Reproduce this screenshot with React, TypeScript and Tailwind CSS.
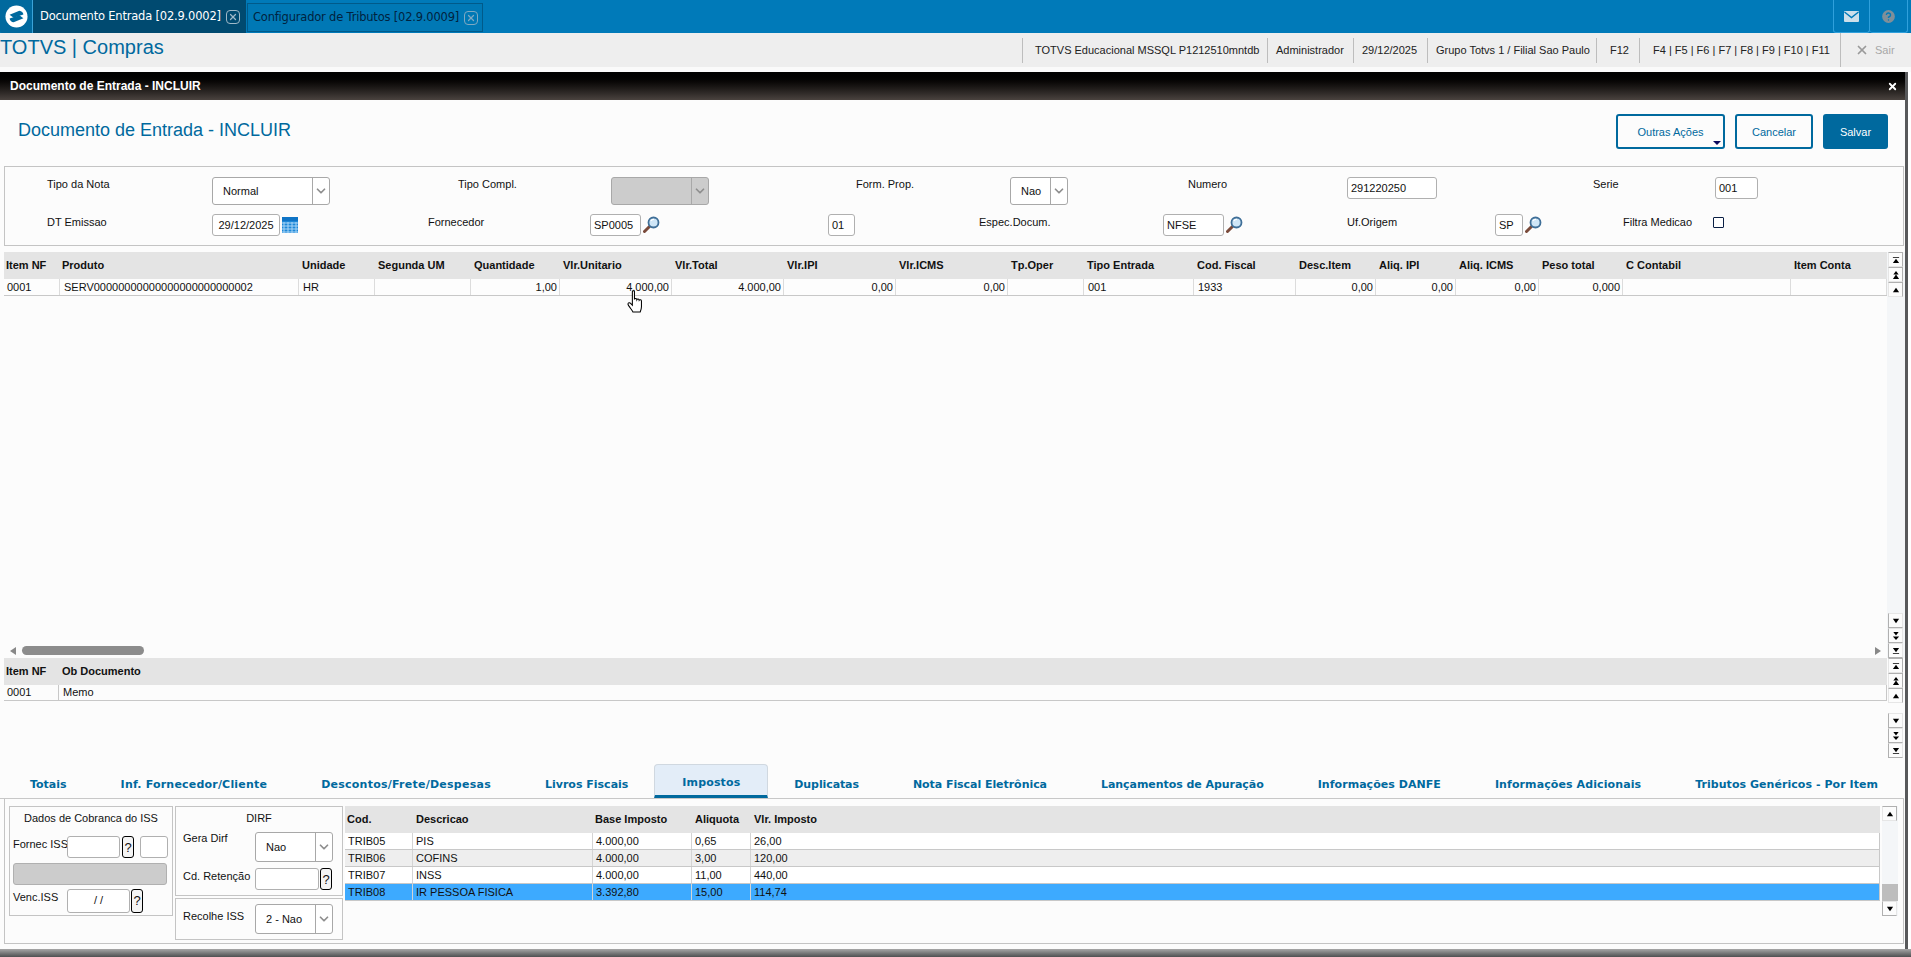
import React from 'react';
import { X, CircleHelp, ChevronDown } from 'lucide-react';

const gridCols = [
  ['Item NF', 56, '0001', 'l'],
  ['Produto', 239, 'SERV00000000000000000000000002', 'l'],
  ['Unidade', 76, 'HR', 'l'],
  ['Segunda UM', 96, '', 'l'],
  ['Quantidade', 89, '1,00', 'r'],
  ['Vlr.Unitario', 112, '4.000,00', 'r'],
  ['Vlr.Total', 112, '4.000,00', 'r'],
  ['Vlr.IPI', 112, '0,00', 'r'],
  ['Vlr.ICMS', 112, '0,00', 'r'],
  ['Tp.Oper', 76, '', 'l'],
  ['Tipo Entrada', 110, '001', 'l'],
  ['Cod. Fiscal', 102, '1933', 'l'],
  ['Desc.Item', 80, '0,00', 'r'],
  ['Aliq. IPI', 80, '0,00', 'r'],
  ['Aliq. ICMS', 83, '0,00', 'r'],
  ['Peso total', 84, '0,000', 'r'],
  ['C Contabil', 168, '', 'l'],
  ['Item Conta', 96, '', 'l'],
] as const;

const taxRows = [
  ['TRIB05', 'PIS', '4.000,00', '0,65', '26,00'],
  ['TRIB06', 'COFINS', '4.000,00', '3,00', '120,00'],
  ['TRIB07', 'INSS', '4.000,00', '11,00', '440,00'],
  ['TRIB08', 'IR PESSOA FISICA', '3.392,80', '15,00', '114,74'],
];

const tabs = [
  ['Totais', 'tracking-normal'],
  ['Inf. Fornecedor/Cliente', 'tracking-[0.2px]'],
  ['Descontos/Frete/Despesas', 'tracking-[0.25px]'],
  ['Livros Fiscais', 'tracking-normal'],
  ['Impostos', 'tracking-[0.15px]'],
  ['Duplicatas', 'tracking-[-0.1px]'],
  ['Nota Fiscal Eletrônica', 'tracking-[-0.05px]'],
  ['Lançamentos de Apuração', 'tracking-[-0.05px]'],
  ['Informações DANFE', 'tracking-[0.05px]'],
  ['Informações Adicionais', 'tracking-[0.1px]'],
  ['Tributos Genéricos - Por Item', 'tracking-[0.05px]'],
];

type ArrowKind = 'up' | 'down' | 'dup' | 'ddown' | 'top' | 'bottom';

const Logo = () => (
  <svg viewBox="0 0 24 24" className="w-[23px] h-[23px]">
    <circle cx="12" cy="12" r="11.5" fill="#fff" />
    <path d="M4.8 10.2 L15 6 Q18.6 6.6 19.2 10 L9 13.2 Z" fill="#00699e" />
    <path d="M19.2 13.8 L9 18 Q5.4 17.4 4.8 14 L15 10.8 Z" fill="#00699e" />
  </svg>
);

const MailIcon = () => (
  <svg viewBox="0 0 15 11" className="w-[15px] h-[11px]">
    <rect width="15" height="11" rx="1" fill="#cddfea" />
    <path d="M0.5 1 L7.5 6.5 L14.5 1" fill="none" stroke="#007ab9" strokeWidth="1.4" />
  </svg>
);

const CalendarIcon = () => (
  <svg viewBox="0 0 16 16" className="w-4 h-4 ml-[2px] mt-[3px] shrink-0">
    <rect width="16" height="16" fill="#1e88d8" />
    <rect x="0" y="0" width="16" height="4" fill="#0f74c6" />
    {[2, 6, 10, 14].map((x) => (
      <path key={x} d={`M${x} 5V16`} stroke="#a9d6f7" strokeWidth="1" />
    ))}
    {[6, 9, 12, 15].map((y) => (
      <path key={y} d={`M0 ${y}H16`} stroke="#a9d6f7" strokeWidth="1" />
    ))}
  </svg>
);

const SearchIcon = () => (
  <svg viewBox="0 0 17 17" className="w-[17px] h-[17px] ml-[2px] mt-[2px] shrink-0">
    <path d="M6.5 10.5 L1.5 15.5" stroke="#7a4a3a" strokeWidth="3" strokeLinecap="round" />
    <circle cx="10.5" cy="6.5" r="5" fill="#cfe6f7" stroke="#3f6f98" strokeWidth="1.8" />
    <path d="M8 5 A3 3 0 0 1 11 3.5" stroke="#fff" strokeWidth="1.2" fill="none" />
  </svg>
);

const HandCursor = () => (
  <svg viewBox="0 0 16 22" className="absolute left-[626px] top-[290px] w-[19px] h-[23px]">
    <path
      d="M5 1.5 C5 .5 7 .5 7 1.5 V9 C7.5 7.8 9.2 8 9.3 9.3 C9.8 8.3 11.3 8.5 11.5 9.8 C12 9 13.6 9.3 13.7 10.5 V16 C13.7 18 12.7 20.5 12.5 21 H5.5 C5 19.5 1 15 .8 13.5 C.7 12 2.5 11.8 3.3 12.8 L5 14.5 Z"
      fill="#fff"
      stroke="#000"
      strokeWidth="1"
    />
  </svg>
);

const Arrow = ({ kind }: { kind: ArrowKind }) => (
  <svg viewBox="0 0 9 9" className="w-2 h-2">
    {kind === 'up' && <path d="M4.5 2 L8 7 H1 Z" fill="#000" />}
    {kind === 'down' && <path d="M1 2 H8 L4.5 7 Z" fill="#000" />}
    {kind === 'dup' && <path d="M4.5 0 L7.5 4 H1.5 Z M4.5 4 L8 9 H1 Z" fill="#000" />}
    {kind === 'ddown' && <path d="M1.5 0 H7.5 L4.5 4 Z M1 5 H8 L4.5 9 Z" fill="#000" />}
    {kind === 'top' && <path d="M1 1 H8 V2 H1 Z M4.5 3 L8 8 H1 Z" fill="#000" />}
    {kind === 'bottom' && <path d="M1 1 H8 L4.5 6 Z M1 7 H8 V8 H1 Z" fill="#000" />}
  </svg>
);

const ScrollBtn = ({ kind }: { kind: ArrowKind }) => {
  const isUp = kind === 'up' || kind === 'dup' || kind === 'top';
  return (
    <div
      className={`w-[15px] h-[15px] flex items-center justify-center bg-[#fcfcfc] border border-[#e6e6e6] ${
        isUp ? 'border-t-[#b0b0b0] border-r-[#b0b0b0]' : 'border-l-[#b0b0b0] border-b-[#b0b0b0]'
      }`}
    >
      <Arrow kind={kind} />
    </div>
  );
};

const SelectBox = (props: { value: string; width: string; disabled?: boolean; height?: string }) => (
  <div
    className={`flex items-stretch shrink-0 border border-[#a8a8a8] rounded-[3px] ${props.width} ${props.height || 'h-7'} ${
      props.disabled ? 'bg-[#cccccc]' : 'bg-white'
    }`}
  >
    <div className="flex-1 flex items-center pl-[10px]">{props.value}</div>
    <div className="w-[17px] flex items-center justify-center border-l border-[#a8a8a8]">
      <ChevronDown size={14} strokeWidth={3} className="text-[#8e8e8e]" />
    </div>
  </div>
);

const Input = (props: { value?: string; width: string; height?: string; center?: boolean }) => (
  <div
    className={`flex items-center shrink-0 border border-[#b0b0b0] rounded-[3px] bg-white ${props.width} ${
      props.height || 'h-[22px]'
    } ${props.center ? 'justify-center' : 'pl-[3px]'}`}
  >
    {props.value}
  </div>
);

const Help = (props: { height?: string }) => (
  <div
    className={`flex items-center justify-center w-3 ml-px shrink-0 bg-[#f4f4f4] border border-black rounded-[3px] text-[13px] leading-none ${
      props.height || 'h-[22px]'
    }`}
  >
    ?
  </div>
);

const App: React.FC = () => {
  return (
    <div className="relative w-[1911px] h-[957px] overflow-hidden bg-white text-[11px] text-[#111] font-['Liberation_Sans',Arial,sans-serif]">
      {/* top blue bar */}
      <header className="flex items-stretch h-[33px] bg-[#007ab9]">
        <div className="w-[33px] flex items-center justify-center bg-[#00699e] border-r border-[#3ba3d8] rounded-bl-[2px]">
          <Logo />
        </div>
        <div className="w-[213px] flex items-center gap-[5px] pl-[7px] bg-[#004a70] text-white font-['DejaVu_Sans',sans-serif] text-[11.5px] tracking-[-0.2px] whitespace-nowrap">
          <span>Documento Entrada [02.9.0002]</span>
          <span className="flex items-center justify-center w-[14px] h-[14px] border border-[#9fb9c8] rounded-[4px] text-[#9fb9c8]">
            <X size={10} strokeWidth={3} />
          </span>
        </div>
        <div className="w-[236px] ml-[1px] mt-[3px] mb-[1px] flex items-center gap-[5px] pl-[5px] bg-[#0078b5] border border-[#005a8a] font-['DejaVu_Sans',sans-serif] text-[11.5px] tracking-[-0.2px] text-[#01233f] whitespace-nowrap">
          <span>Configurador de Tributos [02.9.0009]</span>
          <span className="flex items-center justify-center w-[14px] h-[14px] border border-[#7fa9c2] rounded-[4px] text-[#7fa9c2]">
            <X size={10} strokeWidth={3} />
          </span>
        </div>
        <div className="flex-1" />
        <div className="w-[37px] flex items-center justify-center border-x border-b border-[#2fa0dc] rounded-b-[3px]">
          <MailIcon />
        </div>
        <div className="w-[38px] mr-[3px] flex items-center justify-center border-r border-b border-[#2fa0dc] rounded-b-[3px]">
          <CircleHelp size={17} fill="#7f8f99" stroke="#007ab9" strokeWidth={2} />
        </div>
      </header>

      {/* module bar */}
      <div className="flex items-center justify-between h-[34px] bg-[#eeeeee]">
        <div className="text-[20px] leading-none text-[#00699e] -mt-[6px]">TOTVS | Compras</div>
        <div className="flex items-center h-[25px] text-[#222] whitespace-nowrap">
          <div className="h-full w-[245px] flex items-center pl-[12px] border-l border-[#bdbdbd]">TOTVS Educacional MSSQL P1212510mntdb</div>
          <div className="h-full w-[86px] flex items-center pl-[8px] border-l border-[#bdbdbd]">Administrador</div>
          <div className="h-full w-[74px] flex items-center pl-[8px] border-l border-[#bdbdbd]">29/12/2025</div>
          <div className="h-full w-[169px] flex items-center pl-[8px] border-l border-[#bdbdbd]">Grupo Totvs 1 / Filial Sao Paulo</div>
          <div className="h-full w-[43px] flex items-center pl-[13px] border-l border-[#bdbdbd]">F12</div>
          <div className="h-full w-[201px] flex items-center pl-[13px] border-l border-[#bdbdbd]">F4 | F5 | F6 | F7 | F8 | F9 | F10 | F11</div>
          <div className="h-[34px] w-[71px] flex items-center gap-[6px] pl-[14px] border-l border-[#bdbdbd] text-[#a8a8a8]">
            <X size={14} strokeWidth={3} className="text-[#9a9a9a]" />
            <span>Sair</span>
          </div>
        </div>
      </div>
      <div className="h-[5px] bg-[#fafafa]" />

      {/* dialog */}
      <div className="flex flex-col h-[885px] mr-[6px] bg-[#fcfcfc]">
        <div className="flex items-center justify-between h-[28px] pl-[10px] pr-[7px] bg-gradient-to-b from-black to-[#4a433f] text-white text-[12px] font-bold">
          <span>Documento de Entrada - INCLUIR</span>
          <X size={11} strokeWidth={4} />
        </div>

        <div className="flex items-start justify-between h-[66px] pl-[18px] pr-[17px] pt-[14px]">
          <h1 className="text-[18px] leading-[28px] text-[#00699e] mt-[2px]">Documento de Entrada - INCLUIR</h1>
          <div className="flex gap-[10px]">
            <button className="relative w-[109px] h-[35px] pt-px border-2 border-[#00699e] rounded-[3px] text-[#00699e]">
              Outras Ações
              <span className="absolute right-[2px] bottom-[2px] w-0 h-0 border-x-[4px] border-x-transparent border-t-[4px] border-t-[#0a0a5e]" />
            </button>
            <button className="w-[78px] h-[35px] pt-px border-2 border-[#00699e] rounded-[3px] text-[#00699e]">Cancelar</button>
            <button className="w-[65px] h-[35px] pt-px bg-[#00699e] rounded-[3px] text-white">Salvar</button>
          </div>
        </div>

        {/* form */}
        <div className="flex flex-col gap-[9px] h-[80px] ml-[4px] mr-[1px] pt-[10px] border border-[#c4c4c4]">
          <div className="flex items-start h-[28px]">
            <div className="w-[42px]" />
            <div className="w-[165px] -mt-[1px]">Tipo da Nota</div>
            <SelectBox value="Normal" width="w-[118px]" />
            <div className="w-[128px]" />
            <div className="w-[153px] -mt-[1px]">Tipo Compl.</div>
            <SelectBox value="" width="w-[98px]" disabled />
            <div className="w-[147px]" />
            <div className="w-[154px] -mt-[1px]">Form. Prop.</div>
            <SelectBox value="Nao" width="w-[58px]" />
            <div className="w-[120px]" />
            <div className="w-[159px] -mt-[1px]">Numero</div>
            <Input value="291220250" width="w-[90px]" />
            <div className="w-[156px]" />
            <div className="w-[122px] -mt-[1px]">Serie</div>
            <Input value="001" width="w-[43px]" />
          </div>
          <div className="flex items-start h-[22px]">
            <div className="w-[42px]" />
            <div className="w-[165px]">DT Emissao</div>
            <Input value="29/12/2025" width="w-[68px]" center />
            <CalendarIcon />
            <div className="w-[130px]" />
            <div className="w-[162px]">Fornecedor</div>
            <Input value="SP0005" width="w-[51px]" />
            <SearchIcon />
            <div className="w-[168px]" />
            <Input value="01" width="w-[27px]" />
            <div className="w-[124px]" />
            <div className="w-[184px]">Espec.Docum.</div>
            <Input value="NFSE" width="w-[61px]" />
            <SearchIcon />
            <div className="w-[104px]" />
            <div className="w-[148px]">Uf.Origem</div>
            <Input value="SP" width="w-[28px]" />
            <SearchIcon />
            <div className="w-[81px]" />
            <div className="w-[90px]">Filtra Medicao</div>
            <div className="w-[11px] h-[11px] mt-[3px] border border-[#0a1f44] rounded-[1px] bg-white" />
          </div>
        </div>

        {/* items grid */}
        <div className="flex h-[406px] mt-[6px]">
          <div className="flex-1 ml-[4px] flex flex-col min-w-0">
            <div className="flex-1 overflow-hidden">
              <div className="flex h-[27px] items-center bg-[#e4e4e4] font-bold w-[1883px]">
                {gridCols.map((c, i) => (
                  <div
                    key={c[0]}
                    className={`shrink-0 whitespace-nowrap ${i < 2 ? 'pl-[2px]' : 'pl-[3px]'}`}
                    style={{ width: c[1] }}
                  >
                    {c[0]}
                  </div>
                ))}
              </div>
              <div className="flex h-[17px] items-center border-b border-[#c8c8c8] bg-[#fdfdfd] w-[1883px]">
                {gridCols.map((c, i) => (
                  <div
                    key={c[0]}
                    className={`shrink-0 h-full flex items-center pr-[2px] border-r border-[#dcdcdc] whitespace-nowrap ${
                      i === 0 ? 'pl-[3px]' : 'pl-[4px]'
                    } ${c[3] === 'r' ? 'justify-end' : ''}`}
                    style={{ width: c[1] }}
                  >
                    {c[2]}
                  </div>
                ))}
              </div>
            </div>
            <div className="flex items-center h-[9px] mb-[3px] pl-[6px] pr-[6px]">
              <div className="w-0 h-0 border-y-[4px] border-y-transparent border-r-[6px] border-r-[#888]" />
              <div className="w-[122px] h-[9px] ml-[6px] rounded-full bg-[#8c8c8c]" />
              <div className="flex-1" />
              <div className="w-0 h-0 border-y-[4px] border-y-transparent border-l-[6px] border-l-[#888]" />
            </div>
          </div>
          <div className="w-[18px] flex flex-col justify-between bg-[#f4f6f8] pl-px">
            <div className="flex flex-col">
              <ScrollBtn kind="top" />
              <ScrollBtn kind="dup" />
              <ScrollBtn kind="up" />
            </div>
            <div className="flex flex-col">
              <ScrollBtn kind="down" />
              <ScrollBtn kind="ddown" />
              <ScrollBtn kind="bottom" />
            </div>
          </div>
        </div>

        {/* obs grid */}
        <div className="flex h-[102px]">
          <div className="flex-1 ml-[4px] min-w-0">
            <div className="flex h-[27px] items-center bg-[#e4e4e4] font-bold">
              <div className="w-[55px] pl-[2px]">Item NF</div>
              <div className="pl-[3px]">Ob Documento</div>
            </div>
            <div className="flex h-[16px] items-center border-b border-r border-[#c8c8c8]">
              <div className="w-[55px] h-full flex items-center pl-[3px] border-r border-[#c8c8c8]">0001</div>
              <div className="pl-[4px]">Memo</div>
            </div>
          </div>
          <div className="w-[18px] flex flex-col justify-between pl-px pb-[2px]">
            <div className="flex flex-col">
              <ScrollBtn kind="top" />
              <ScrollBtn kind="dup" />
              <ScrollBtn kind="up" />
            </div>
            <div className="flex flex-col">
              <ScrollBtn kind="down" />
              <ScrollBtn kind="ddown" />
              <ScrollBtn kind="bottom" />
            </div>
          </div>
        </div>

        {/* tabs */}
        <div className="flex items-end justify-between h-[39px] pl-[30px] pr-[26px] border-b border-[#c8c8c8] mr-[1px] font-['DejaVu_Sans',sans-serif] font-bold text-[#00699e] whitespace-nowrap">
          {tabs.map(([t, tracking]) =>
            t === 'Impostos' ? (
              <div
                key={t}
                className={`w-[114px] -mx-[28px] h-[34px] flex justify-center pt-[10px] bg-[#e3edf8] border border-b-[3px] border-[#d0d8e0] border-b-[#00699e] rounded-t-[4px] ${tracking}`}
              >
                {t}
              </div>
            ) : (
              <div key={t} className={`pb-[5px] ${tracking}`}>
                {t}
              </div>
            ),
          )}
        </div>

        {/* bottom panel */}
        <div className="flex h-[145px] ml-[4px] mr-[1px] pl-[4px] pt-[7px] border border-t-0 border-[#c4c4c4]">
          <div className="w-[164px] h-[110px] flex flex-col px-[3px] border border-[#c4c4c4]">
            <div className="h-[17px] mt-[3px] mb-[9px] text-center">Dados de Cobranca do ISS</div>
            <div className="flex items-center">
              <div className="w-[54px] shrink-0 mb-[6px] whitespace-nowrap">Fornec ISS</div>
              <Input width="w-[53px]" />
              <div className="w-px" />
              <Help />
              <div className="w-[6px]" />
              <Input width="w-[28px]" />
            </div>
            <div className="w-[154px] h-[22px] mt-[4px] bg-[#cccccc] border border-[#b0b0b0] rounded-[3px]" />
            <div className="flex items-center mt-[4px]">
              <div className="w-[54px] shrink-0 mb-[6px]">Venc.ISS</div>
              <Input value="/ /" width="w-[63px]" height="h-[24px]" center />
              <Help height="h-[24px]" />
            </div>
          </div>
          <div className="w-[168px] ml-[2px] flex flex-col gap-[2px]">
            <div className="h-[90px] flex flex-col px-[7px] border border-[#c4c4c4]">
              <div className="h-[17px] mt-[3px] mb-[5px] text-center">DIRF</div>
              <div className="flex items-start">
                <div className="w-[72px] -mt-[2px]">Gera Dirf</div>
                <SelectBox value="Nao" width="w-[78px]" height="h-[30px]" />
              </div>
              <div className="flex items-center mt-[6px]">
                <div className="w-[72px] mb-[6px] whitespace-nowrap">Cd. Retenção</div>
                <Input width="w-[64px]" />
                <Help />
              </div>
            </div>
            <div className="h-[42px] flex items-center px-[7px] border border-[#c4c4c4]">
              <div className="w-[72px] mb-[6px]">Recolhe ISS</div>
              <SelectBox value="2 - Nao" width="w-[78px]" height="h-[30px]" />
            </div>
          </div>
          <div className="w-[1535px] ml-[2px]">
            <div className="flex h-[27px] items-center bg-[#e4e4e4] font-bold">
              <div className="w-[68px] pl-[2px]">Cod.</div>
              <div className="w-[180px] pl-[3px]">Descricao</div>
              <div className="w-[99px] pl-[2px]">Base Imposto</div>
              <div className="w-[59px] pl-[3px]">Aliquota</div>
              <div className="pl-[3px]">Vlr. Imposto</div>
            </div>
            {taxRows.map((row, i) => (
              <div
                key={row[0]}
                className={`flex h-[17px] items-center border-b border-r border-[#c8c8c8] ${
                  i === 3 ? 'bg-[#3daaff]' : i === 1 ? 'bg-[#eeeeee]' : 'bg-white'
                }`}
              >
                <div className="w-[68px] h-full flex items-center pl-[3px] border-r border-[#d4d4d4]">{row[0]}</div>
                <div className="w-[180px] h-full flex items-center pl-[3px] border-r border-[#d4d4d4]">{row[1]}</div>
                <div className="w-[99px] h-full flex items-center pl-[3px] border-r border-[#d4d4d4]">{row[2]}</div>
                <div className="w-[59px] h-full flex items-center pl-[3px] border-r border-[#d4d4d4]">{row[3]}</div>
                <div className="pl-[3px]">{row[4]}</div>
              </div>
            ))}
          </div>
          <div className="w-[16px] h-[110px] ml-[2px] flex flex-col bg-[#f4f6f8]">
            <ScrollBtn kind="up" />
            <div className="flex-1 flex flex-col justify-end">
              <div className="h-[17px] bg-[#bdbdbd]" />
            </div>
            <ScrollBtn kind="down" />
          </div>
        </div>
      </div>

      {/* window edges */}
      <div className="absolute right-[3px] top-[72px] bottom-0 w-[3px] bg-[#58595b]" />
      <div className="absolute left-0 right-0 bottom-0 h-[8px] bg-gradient-to-b from-[#a8a8a8] to-[#4f5052]" />
      <HandCursor />
    </div>
  );
};

export default App;
